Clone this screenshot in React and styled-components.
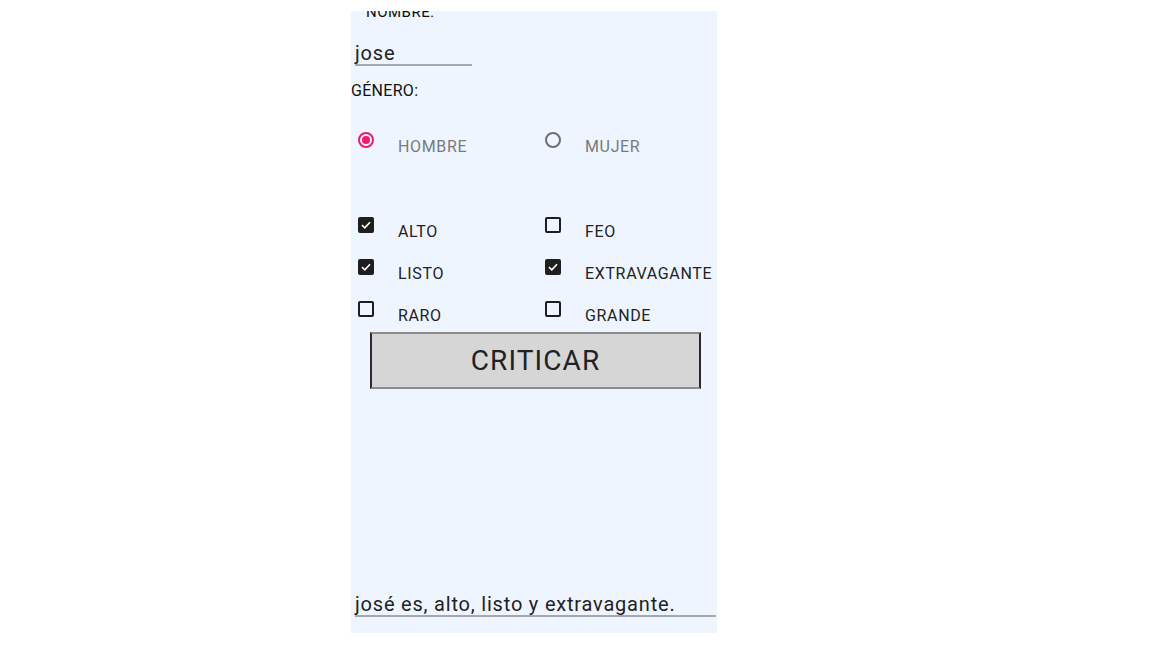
import React from "react";
import styled, { createGlobalStyle } from "styled-components";

const Global = createGlobalStyle`
  html, body { margin: 0; padding: 0; background: #ffffff; }
  body { font-family: Roboto, "Noto Sans", "Liberation Sans", sans-serif; }
`;

const Page = styled.div`
  width: 1152px;
  height: 648px;
  padding: 11px 0 0 351px;
  box-sizing: border-box;
`;

const Screen = styled.div`
  width: 366px;
  height: 622px;
  background: #eef5fe;
  overflow: hidden;
  display: flex;
  flex-direction: column;
  color: #222;
`;

const TopLabel = styled.div`
  margin: -7px 0 0 15px;
  font-size: 15px;
  line-height: 16px;
  letter-spacing: 0.5px;
  color: #111;
`;

const Field = styled.div`
  margin: ${(p) => p.$mt || "0"} 0 0 4px;
  width: ${(p) => p.$w};
  font-size: 20px;
  line-height: 22px;
  letter-spacing: 0.8px;
  color: #222;
  border-bottom: 2px solid #a6a8b0;
  white-space: nowrap;
`;

const SectionLabel = styled.div`
  margin-top: 16px;
  font-size: 16px;
  line-height: 18px;
  letter-spacing: 0.3px;
  color: #111;
`;

const OptionGrid = styled.div`
  margin: ${(p) => p.$mt} 0 0 7px;
  display: grid;
  grid-template-columns: 187px 172px;
  grid-auto-rows: 24px;
  row-gap: 18px;
`;

const Option = styled.div`
  display: flex;
  align-items: flex-start;
`;

const OptionText = styled.span`
  margin: 6px 0 0 24px;
  font-size: 16px;
  line-height: 18px;
  letter-spacing: 0.65px;
  color: ${(p) => (p.$muted ? "#7a7a7e" : "#222")};
  white-space: nowrap;
`;

const Radio = styled.span`
  width: 16px;
  height: 16px;
  box-sizing: border-box;
  border-radius: 50%;
  border: 2px solid ${(p) => (p.$on ? "#ec1c6a" : "#6f6f72")};
  display: flex;
  align-items: center;
  justify-content: center;
  flex: none;
  &::after {
    content: "";
    width: 8px;
    height: 8px;
    border-radius: 50%;
    background: ${(p) => (p.$on ? "#ec1c6a" : "transparent")};
  }
`;

const Box = styled.span`
  width: 16px;
  height: 16px;
  box-sizing: border-box;
  border-radius: 2px;
  border: 2px solid #1e1e1e;
  background: ${(p) => (p.$on ? "#1e1e1e" : "transparent")};
  display: flex;
  align-items: center;
  justify-content: center;
  flex: none;
`;

const Button = styled.div`
  margin: 7px 0 0 19px;
  width: 331px;
  height: 57px;
  box-sizing: border-box;
  background: #d6d6d6;
  border-top: 2px solid #8c8c8e;
  border-bottom: 2px solid #8c8c8e;
  border-left: 2px solid #2a2a2a;
  border-right: 2px solid #2a2a2a;
  display: flex;
  align-items: center;
  justify-content: center;
  font-size: 28px;
  color: #222;
  letter-spacing: 1.1px;
`;

const Spacer = styled.div`
  flex: 1;
`;

const Result = styled(Field)`
  margin-bottom: 16px;
`;

const Check = () => (
  <svg width="10" height="8" viewBox="0 0 10 8">
    <path d="M1 4.2 L3.8 6.8 L9 1.2" fill="none" stroke="#fff" strokeWidth="1.6" />
  </svg>
);

const checks = [
  ["ALTO", true],
  ["FEO", false],
  ["LISTO", true],
  ["EXTRAVAGANTE", true],
  ["RARO", false],
  ["GRANDE", false],
];

export default function App() {
  return (
    <>
      <Global />
      <Page>
        <Screen>
          <TopLabel>NOMBRE:</TopLabel>
          <Field $mt="22px" $w="117px">jose</Field>
          <SectionLabel>GÉNERO:</SectionLabel>
          <OptionGrid $mt="32px">
            <Option>
              <Radio $on />
              <OptionText $muted>HOMBRE</OptionText>
            </Option>
            <Option>
              <Radio />
              <OptionText $muted>MUJER</OptionText>
            </Option>
          </OptionGrid>
          <OptionGrid $mt="61px">
            {checks.map(([label, on]) => (
              <Option key={label}>
                <Box $on={on}>{on && <Check />}</Box>
                <OptionText>{label}</OptionText>
              </Option>
            ))}
          </OptionGrid>
          <Button>CRITICAR</Button>
          <Spacer />
          <Result $w="361px">josé es, alto, listo y extravagante.</Result>
        </Screen>
      </Page>
    </>
  );
}
